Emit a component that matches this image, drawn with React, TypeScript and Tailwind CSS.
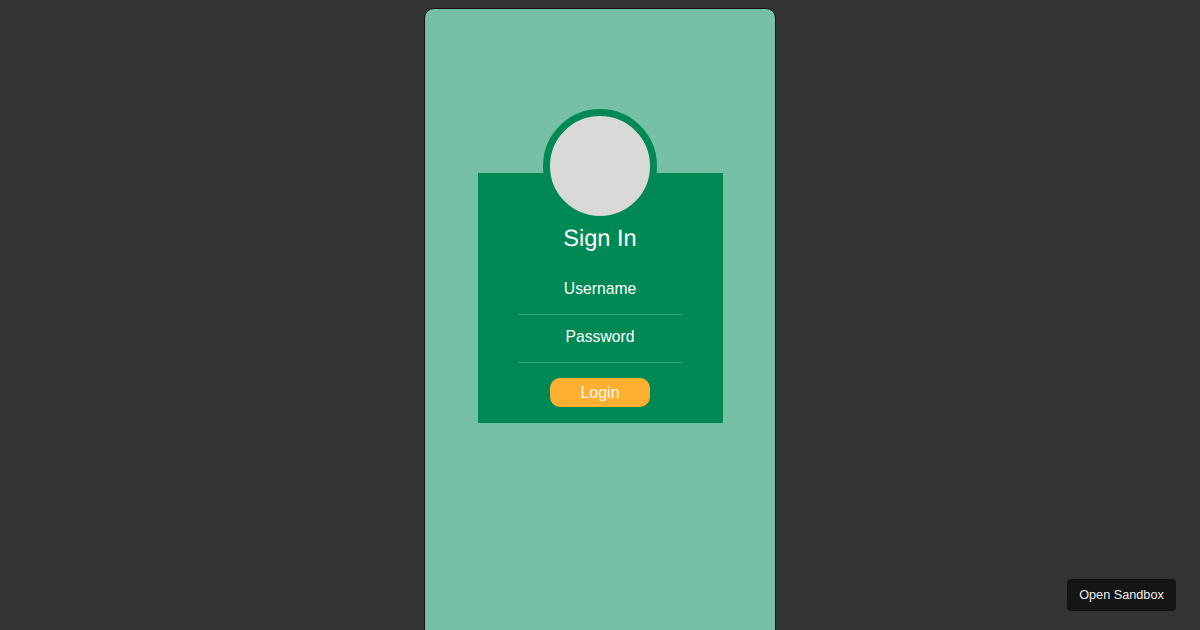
export default function App() {
  return (
    <div className="relative flex h-[630px] justify-center overflow-hidden bg-[#333333] pt-[8px] font-['Liberation_Sans',Arial,sans-serif] [text-rendering:geometricPrecision]">
      {/* phone shell */}
      <div className="flex h-[640px] w-[352px] flex-col items-center rounded-[10px] border border-[#111111] bg-[#76c1a5] pt-[164px]">
        <form className="flex h-[250px] w-[245px] flex-col items-center bg-[#008955]">
          <div className="-mt-[64px] size-[114px] shrink-0 rounded-full border-[7px] border-[#008955] bg-[#d9d9d9]" />
          <h1 className="mt-[2px] text-center text-[23.6px] leading-[28px] font-normal text-white">Sign In</h1>
          <input
            placeholder="Username"
            className="mt-[14px] h-[48px] w-[165px] border-b border-white/20 bg-transparent pb-[4px] text-center text-[15.7px] text-white outline-none placeholder:text-white"
          />
          <input
            placeholder="Password"
            className="h-[48px] w-[165px] border-b border-white/20 bg-transparent pb-[4px] text-center text-[15.7px] text-white outline-none placeholder:text-white"
          />
          <button
            type="button"
            className="mt-[15px] h-[29px] w-[100px] rounded-[10px] bg-[#ffb030] text-[16px] text-white/90"
          >
            Login
          </button>
        </form>
      </div>

      <button
        type="button"
        className="absolute right-[24px] bottom-[19px] h-[32px] w-[109px] rounded-[4px] bg-[#151515] pt-px text-[12.7px] text-[#f0f0f0]"
      >
        Open Sandbox
      </button>
    </div>
  )
}
